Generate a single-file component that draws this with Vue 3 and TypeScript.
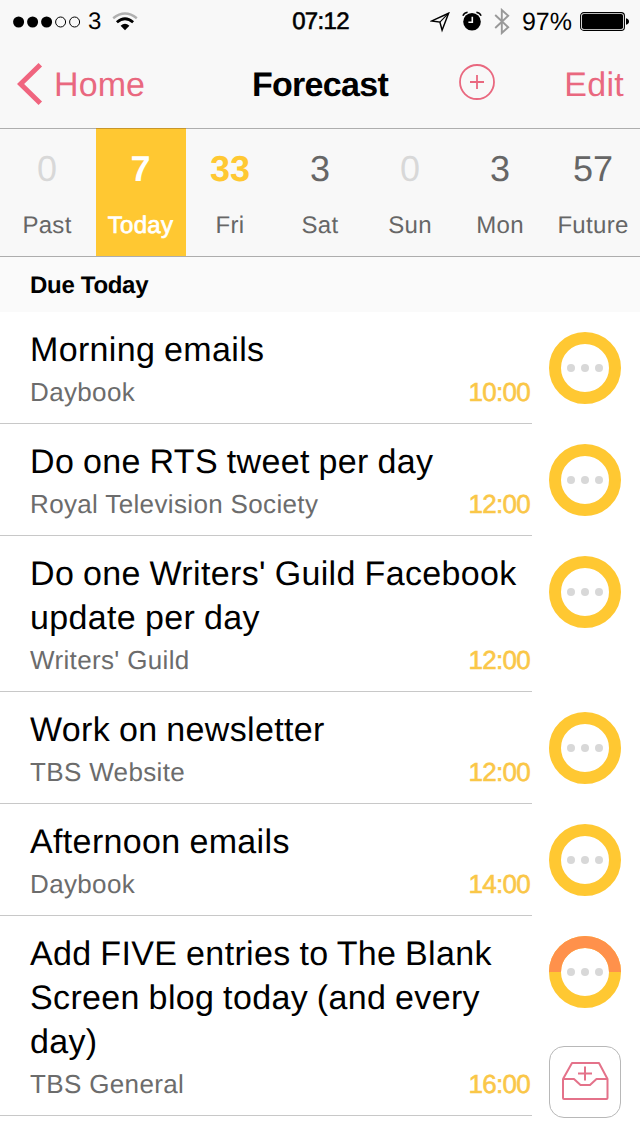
<script setup lang="ts">
interface Day { count: number; label: string; kind: 'empty' | 'active' | 'soon' | 'normal' }
interface Task { lines: string[]; project: string; time: string; split?: boolean }

const days: Day[] = [
  { count: 0, label: 'Past', kind: 'empty' },
  { count: 7, label: 'Today', kind: 'active' },
  { count: 33, label: 'Fri', kind: 'soon' },
  { count: 3, label: 'Sat', kind: 'normal' },
  { count: 0, label: 'Sun', kind: 'empty' },
  { count: 3, label: 'Mon', kind: 'normal' },
  { count: 57, label: 'Future', kind: 'normal' },
]

const tasks: Task[] = [
  { lines: ['Morning emails'], project: 'Daybook', time: '10:00' },
  { lines: ['Do one RTS tweet per day'], project: 'Royal Television Society', time: '12:00' },
  { lines: ["Do one Writers' Guild Facebook", 'update per day'], project: "Writers' Guild", time: '12:00' },
  { lines: ['Work on newsletter'], project: 'TBS Website', time: '12:00' },
  { lines: ['Afternoon emails'], project: 'Daybook', time: '14:00' },
  { lines: ['Add FIVE entries to The Blank', 'Screen blog today (and every', 'day)'], project: 'TBS General', time: '16:00', split: true },
]
</script>

<template>
  <div class="screen">
    <header class="top">
      <div class="status">
        <div class="status-left">
          <svg class="signal" width="68" height="12" viewBox="0 0 68 12">
            <circle cx="5.6" cy="6" r="5.5" />
            <circle cx="19.6" cy="6" r="5.5" />
            <circle cx="33.6" cy="6" r="5.5" />
            <circle cx="47.6" cy="6" r="5" fill="none" stroke="#000" />
            <circle cx="61.6" cy="6" r="5" fill="none" stroke="#000" />
          </svg>
          <span class="carrier">3</span>
          <svg class="wifi" width="26" height="20" viewBox="0 0 26 20">
            <path d="M1.2 6.2Q13-3.2 24.8 6.2" fill="none" stroke="#b0b0b0" stroke-width="2.5" />
            <path d="M4.9 10.2Q13 3.2 21.1 10.2" fill="none" stroke="#000" stroke-width="2.8" />
            <path d="M8.6 13.8Q13 9.8 17.4 13.8L13 18.3Z" />
          </svg>
        </div>
        <span class="clock">07:12</span>
        <div class="status-right">
          <svg width="20" height="21" viewBox="0 0 20 21">
            <path d="M18.6 1.2L1.8 8.9L9.9 10.1L12.1 18.2Z" fill="none" stroke="#000" stroke-width="1.5" />
            <path d="M18.6 1.2L9.9 10.1" stroke="#000" stroke-width="1.1" />
          </svg>
          <svg class="alarm" width="20" height="20" viewBox="0 0 20 20">
            <circle cx="10" cy="10.8" r="8.8" />
            <path d="M.9 4.7Q2 1.7 5.6 1.2M14.4 1.2Q18 1.7 19.1 4.7" fill="none" stroke="#000" stroke-width="1.5" />
            <path d="M10.3 5.7V11.3H6.4" fill="none" stroke="#f8f8f8" stroke-width="1.6" />
          </svg>
          <svg class="bluetooth" width="16" height="27" viewBox="0 0 16 27">
            <path d="M1.2 7L14.2 19.2L7.8 25V2L14.2 7.8L1.2 20" fill="none" stroke="#999" stroke-width="1.9" />
          </svg>
          <span class="percent">97%</span>
          <svg class="battery" width="49" height="20" viewBox="0 0 49 20">
            <rect x=".6" y=".6" width="43.8" height="17.8" rx="3.2" fill="none" stroke="#000" stroke-width="1.1" />
            <rect x="2" y="2" width="41" height="15" rx="1.8" />
            <path d="M46 6.2Q49 7 49 9.5T46 12.8Z" />
          </svg>
        </div>
      </div>
      <nav class="nav">
        <div class="back">
          <svg width="26" height="42" viewBox="0 0 26 42">
            <path d="M23.3 1.8L3.6 21L23.3 40.2" fill="none" stroke="#f0657f" stroke-width="5" />
          </svg>
          <span class="link home">Home</span>
        </div>
        <h1>Forecast</h1>
        <div class="nav-right">
          <svg class="plus" width="36" height="36" viewBox="0 0 36 36" fill="none" stroke="#e9687f" stroke-width="1.8">
            <circle cx="18" cy="18" r="17" />
            <path d="M11 18H25M18 11V25" />
          </svg>
          <span class="link edit">Edit</span>
        </div>
      </nav>
    </header>

    <div class="days">
      <div v-for="d in days" :key="d.label" class="day" :class="d.kind">
        <span class="count">{{ d.count }}</span>
        <span class="label">{{ d.label }}</span>
      </div>
    </div>

    <h2>Due Today</h2>

    <ul class="tasks">
      <li v-for="(t, i) in tasks" :key="i" class="task">
        <div class="body">
          <div v-for="l in t.lines" :key="l" class="title">{{ l }}</div>
          <div class="meta">
            <span class="project">{{ t.project }}</span>
            <span class="time">{{ t.time }}</span>
          </div>
        </div>
        <svg class="ring" width="72" height="72" viewBox="0 0 72 72">
          <circle cx="36" cy="36" r="30" fill="none" stroke="#ffc832" stroke-width="12" />
          <path v-if="t.split" d="M6 36A30 30 0 0 1 66 36" fill="none" stroke="#ff914b" stroke-width="12" />
          <g fill="#d8d8d8">
            <circle cx="22" cy="36" r="4" />
            <circle cx="36" cy="36" r="4" />
            <circle cx="50" cy="36" r="4" />
          </g>
        </svg>
      </li>
    </ul>

    <button class="inbox" aria-label="Add to inbox">
      <svg width="72" height="72" viewBox="0 0 72 72" fill="none" stroke="#e4728a" stroke-width="2" stroke-linejoin="round">
        <path d="M14 33L23 17H50L58.5 33V52Q58.5 53 57.5 53H15Q14 53 14 52V33H25L31.5 39H41L47.5 33H58.5" />
        <path d="M29 27.5H43M36 20.5V34.5" />
      </svg>
    </button>
  </div>
</template>

<style>
body { margin: 0; }
</style>

<style scoped>
.screen {
  position: relative;
  box-sizing: border-box;
  width: 640px;
  height: 1136px;
  overflow: hidden;
  background: #fff;
  color: #000;
  font-family: "Liberation Sans", Arial, sans-serif;
  text-rendering: geometricPrecision;
}
.top {
  box-sizing: border-box;
  height: 128px;
  background: #f8f8f8;
}
.status, .nav {
  display: grid;
  grid-template-columns: 1fr auto 1fr;
}
.status {
  height: 40px;
  align-items: center;
  font-size: 25px;
}
.status-left { display: flex; align-items: center; padding-left: 13px; }
.carrier { margin-left: 7px; line-height: 42px; font-size: 24px; }
.wifi { margin-left: 11px; }
.clock {
  line-height: 44px;
  font-size: 24px;
  letter-spacing: -.7px;
  padding-left: 1px;
  -webkit-text-stroke: .6px #000;
}
.status-right { display: flex; align-items: center; justify-content: flex-end; padding-right: 11px; }
.alarm { margin: 0 1px 2px 12px; }
.bluetooth { margin: 0 0 1px 11px; }
.percent { margin-left: 12px; line-height: 42px; font-size: 25px; }
.battery { margin-left: 8px; }
.nav { height: 88px; align-items: center; }
.back { display: flex; align-items: center; padding-left: 17px; }
.link { color: #e9687f; font-size: 34px; line-height: 86px; padding-top: 2px; }
.home { margin-left: 11px; letter-spacing: .1px; }
h1 { margin: 0; padding-top: 2px; font-size: 34px; line-height: 86px; font-weight: 700; letter-spacing: -.7px; }
.nav-right { display: flex; align-items: center; justify-content: flex-end; padding-right: 16px; }
.plus { margin-bottom: 4px; }
.edit { margin-left: 69px; letter-spacing: .3px; }
.days {
  box-sizing: border-box;
  height: 129px;
  display: grid;
  grid-template-columns: 96px repeat(5, 90px) 94px;
  background: linear-gradient(#aeaeae, #aeaeae) top / 100% 1px no-repeat, #f8f8f8;
  border-bottom: 1px solid #adadad;
}
.day {
  display: flex;
  flex-direction: column;
  align-items: center;
  padding: 21px 2px 0 0;
  color: #666;
}
.count { font-size: 36px; line-height: 40px; }
.label { margin-top: 21px; font-size: 24px; line-height: 32px; letter-spacing: .3px; }
.day:last-child { padding-right: 0; }
.empty .count { color: #d8d8d8; }
.soon .count { color: #ffc832; font-weight: 700; }
.active { background: #ffc832; color: #fff; border-top: 1px solid #c8962b; padding: 20px 1px 0 0; }
.active .count { font-weight: 700; }
.active .label { -webkit-text-stroke: .7px #fff; }
h2 {
  box-sizing: border-box;
  margin: 0;
  height: 55px;
  padding: 1px 0 0 30px;
  background: #fafafa;
  font-size: 24px;
  line-height: 55px;
  font-weight: 700;
  letter-spacing: -.3px;
}
.tasks { margin: 0; padding: 0; list-style: none; }
.task { display: flex; }
.body {
  box-sizing: border-box;
  width: 532px;
  padding: 16px 2px 15px 30px;
  border-bottom: 1px solid #c8c8c8;
}
.title { font-size: 34px; line-height: 44px; white-space: nowrap; letter-spacing: .35px; word-spacing: -1px; }
.meta {
  display: flex;
  justify-content: space-between;
  margin-top: 4px;
  font-size: 26px;
  line-height: 32px;
}
.project { color: #6c6c6c; letter-spacing: .35px; }
.time { color: #fac748; letter-spacing: -.7px; -webkit-text-stroke: .6px #fac748; }
.ring { margin: 20px 0 0 17px; }
.inbox {
  position: absolute;
  right: 19px;
  bottom: 18px;
  box-sizing: border-box;
  width: 72px;
  height: 72px;
  padding: 0;
  border: 1px solid #b8b8b8;
  border-radius: 15px;
  background: #fff;
}
.inbox svg { display: block; margin: -1px; }
</style>
